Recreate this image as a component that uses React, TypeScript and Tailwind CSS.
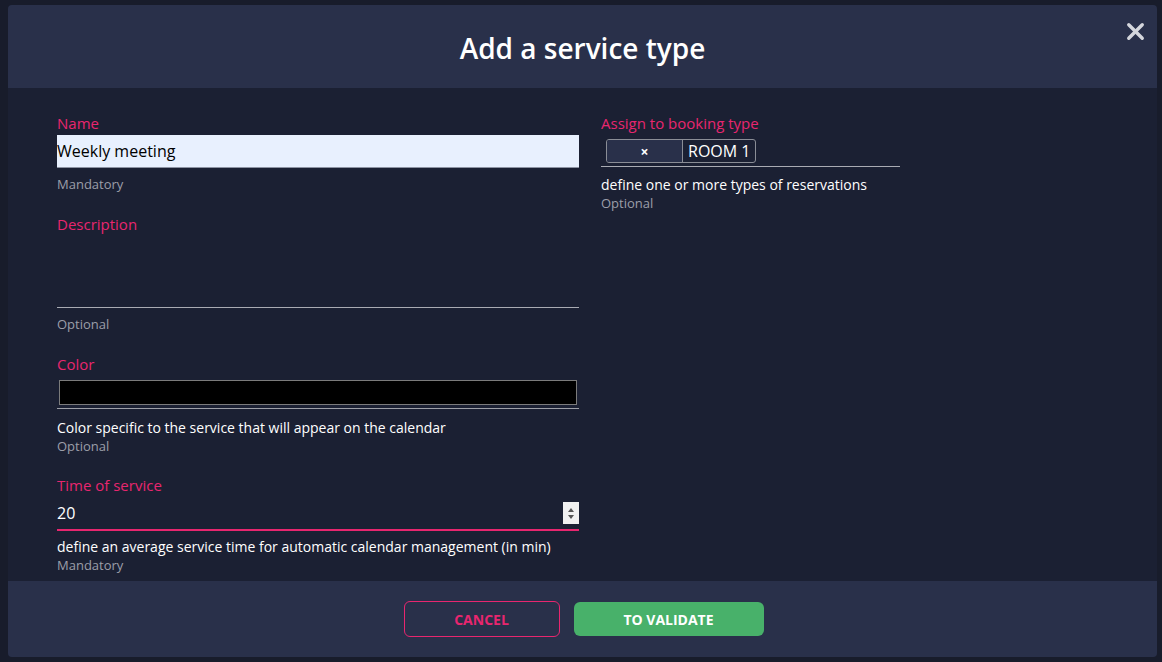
import { X } from 'lucide-react'

function Hint({ text, tone = 'muted' }: { text: string; tone?: 'muted' | 'white' }) {
  return (
    <div className={tone === 'white' ? 'text-[14px] leading-[18px] text-white' : 'text-[13px] leading-[18px] text-[#9b9ea9]'}>
      {text}
    </div>
  )
}

function Label({ children }: { children: React.ReactNode }) {
  return <label className="block text-[15px] leading-[18px] text-[#e8266f]">{children}</label>
}

export default function App() {
  return (
    <div
      className="relative h-[662px] w-[1162px] overflow-hidden bg-[#181c2b]"
      style={{ fontFamily: '"Open Sans", "Noto Sans", sans-serif' }}
    >
      <div className="ml-[8px] mt-[5px] flex h-[652px] w-[1149px] flex-col overflow-hidden rounded-[4px] bg-[#1b2033]">
        <div className="relative flex h-[83px] shrink-0 items-center justify-center bg-[#29304a] pt-[3px]">
          <h1 className="text-[28px] font-semibold text-white">Add a service type</h1>
          <button className="absolute right-[8px] top-[13px] text-[#d4d6dc]">
            <X size={27} strokeWidth={3} />
          </button>
        </div>

        <div className="flex flex-1 gap-[22px] pl-[49px] pt-[26px]">
          <div className="flex w-[522px] flex-col">
            <Label>Name</Label>
            <input
              defaultValue="Weekly meeting"
              className="mt-[3px] h-[33px] w-full border-b border-[#8d93a3] bg-[#e8f0fe] text-[16px] text-black outline-none"
            />
            <div className="mt-[7px]">
              <Hint text="Mandatory" />
            </div>

            <div className="mt-[22px]">
              <Label>Description</Label>
            </div>
            <textarea className="mt-[2px] h-[73px] w-full resize-none border-b border-[#a9abb3] bg-transparent outline-none" />
            <div className="mt-[7px]">
              <Hint text="Optional" />
            </div>

            <div className="mt-[22px]">
              <Label>Color</Label>
            </div>
            <div className="mt-[7px] border-b border-[#9d9fa7] px-[2px] pb-[3px]">
              <div className="h-[25px] w-full border border-[#7b7b7b] bg-black" />
            </div>
            <div className="mt-[10px]">
              <Hint text="Color specific to the service that will appear on the calendar" tone="white" />
              <Hint text="Optional" />
            </div>

            <div className="mt-[21px]">
              <Label>Time of service</Label>
            </div>
            <div className="mt-[7px] flex h-[30px] items-center justify-between border-b-2 border-[#e8266f] pb-[4px]">
              <span className="text-[16px] text-white">20</span>
              <div className="flex h-[22px] w-[16px] flex-col items-center justify-center gap-[3px] bg-[#f1f1f1]">
                <span className="h-0 w-0 border-x-[3.5px] border-b-[4px] border-x-transparent border-b-[#555]" />
                <span className="h-0 w-0 border-x-[3.5px] border-t-[4px] border-x-transparent border-t-[#555]" />
              </div>
            </div>
            <div className="mt-[7px]">
              <Hint text="define an average service time for automatic calendar management (in min)" tone="white" />
              <Hint text="Mandatory" />
            </div>
          </div>

          <div className="flex w-[299px] flex-col">
            <Label>Assign to booking type</Label>
            <div className="mt-[4px] flex h-[31px] items-start border-b border-[#a9abb3] pl-[5px] pt-[3px]">
              <div className="flex h-[24px] overflow-hidden rounded-[3px] border border-[#8a8d96]">
                <span className="flex w-[76px] items-center justify-center border-r border-[#8a8d96] bg-[#29304a] text-[14px] font-bold text-white">
                  ×
                </span>
                <span className="flex items-center px-[5px] text-[16px] text-white">ROOM 1</span>
              </div>
            </div>
            <div className="mt-[9px]">
              <Hint text="define one or more types of reservations" tone="white" />
              <Hint text="Optional" />
            </div>
          </div>
        </div>

        <div className="flex h-[76px] shrink-0 items-center justify-center gap-[14px] bg-[#29304a]">
          <button className="ml-[2px] h-[36px] w-[156px] rounded-[6px] border border-[#e8266f] text-[14px] font-bold text-[#e8266f]">
            CANCEL
          </button>
          <button className="h-[34px] w-[190px] rounded-[6px] bg-[#48b16a] text-[14px] font-bold text-white">
            TO VALIDATE
          </button>
        </div>
      </div>
      <div className="ml-[-23px] mt-[-1px] text-[16px] text-[#cfd1d6]">Showing 1 to 1 of 1 entries</div>
    </div>
  )
}
